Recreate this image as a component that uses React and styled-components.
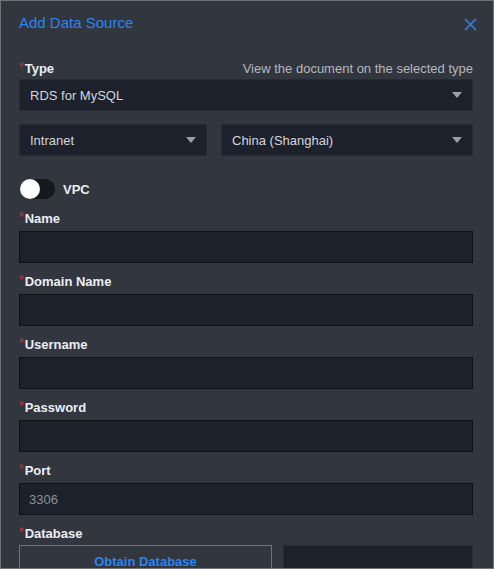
import React from "react";
import styled, { createGlobalStyle } from "styled-components";

const GlobalStyle = createGlobalStyle`
  html, body { margin: 0; padding: 0; background: #31363f; }
  body { font-family: "Liberation Sans", Arial, sans-serif; }
  * { box-sizing: border-box; }
`;

const Frame = styled.div`
  width: 494px;
  height: 569px;
  border: 1px solid #707379;
  background: #31363f;
  overflow: hidden;
  display: flex;
  flex-direction: column;
`;

const Header = styled.div`
  display: flex;
  align-items: center;
  justify-content: space-between;
  padding: 12px 16px 0 18px;
  height: 32px;
`;

const Title = styled.h1`
  margin: 0;
  font-size: 15px;
  line-height: 20px;
  font-weight: 400;
  color: #2b84f2;
`;

const CloseButton = styled.button`
  border: 0;
  background: none;
  padding: 0;
  width: 14px;
  height: 14px;
  display: flex;
  align-items: center;
  justify-content: center;
  cursor: pointer;
  margin-top: 2px;
`;

const Body = styled.div`
  padding: 26px 20px 0 18px;
  display: flex;
  flex-direction: column;
`;

const LabelRow = styled.div`
  display: flex;
  justify-content: space-between;
  align-items: center;
  height: 19px;
  padding-top: 1px;
  margin-bottom: ${(p) => p.$gap ?? 3}px;
`;

const Label = styled.label`
  font-size: 13px;
  line-height: 18px;
  font-weight: 700;
  color: #eceef1;
  &::before {
    content: "*";
    color: #e0262b;
    font-weight: 400;
    font-size: 12px;
    margin-right: 1px;
    position: relative;
    top: -2px;
  }
`;

const DocLink = styled.span`
  font-size: 13px;
  line-height: 18px;
  color: #b4b8be;
`;

const SelectBox = styled.div`
  height: 32px;
  flex: ${(p) => p.$flex ?? "1 1 auto"};
  width: ${(p) => p.$width || "auto"};
  background: #1c212b;
  border: 1px solid #262b34;
  display: flex;
  align-items: center;
  justify-content: space-between;
  padding: 0 10px 0 10px;
  font-size: 13px;
  color: #d3d6db;
`;

const Caret = styled.span`
  width: 0;
  height: 0;
  border-left: 5px solid transparent;
  border-right: 5px solid transparent;
  border-top: 6px solid #9ca0a7;
`;

const SelectRow = styled.div`
  display: flex;
  gap: 14px;
  margin-top: 13px;
`;

const ToggleRow = styled.div`
  display: flex;
  align-items: center;
  gap: 8px;
  height: 20px;
  margin: 23px 0 10px 1px;
`;

const Track = styled.span`
  width: 35px;
  height: 20px;
  border-radius: 10px;
  background: #15181d;
  position: relative;
  display: inline-block;
`;

const Knob = styled.span`
  position: absolute;
  left: 0;
  top: 0;
  width: 20px;
  height: 20px;
  border-radius: 50%;
  background: #ffffff;
`;

const ToggleText = styled.span`
  font-size: 13px;
  font-weight: 700;
  color: #eceef1;
`;

const Field = styled.div`
  display: flex;
  flex-direction: column;
  margin-bottom: 9px;
`;

const Input = styled.input`
  height: 32px;
  width: 100%;
  background: #1c212b;
  border: 1px solid #0e1116;
  padding: 0 9px;
  font-family: inherit;
  font-size: 13px;
  color: #8d9198;
  outline: none;
`;

const DbRow = styled.div`
  display: flex;
  gap: 11px;
`;

const BlueButton = styled.button`
  width: 253px;
  height: 32px;
  flex: none;
  background: transparent;
  border: 1px solid #2680f0;
  color: #2b84f2;
  font-family: inherit;
  font-size: 13px;
  font-weight: 700;
`;

const DarkBox = styled.div`
  flex: 1;
  height: 32px;
  background: #1c212b;
  border: 1px solid #272c35;
`;

const fields = [
  { label: "Name", value: "" },
  { label: "Domain Name", value: "" },
  { label: "Username", value: "" },
  { label: "Password", value: "" },
  { label: "Port", value: "3306" },
];

export default function App() {
  return (
    <>
      <GlobalStyle />
      <Frame>
        <Header>
          <Title>Add Data Source</Title>
          <CloseButton aria-label="close">
            <svg width="13" height="13" viewBox="0 0 13 13">
              <path d="M1 1 L12 12 M12 1 L1 12" stroke="#2b84f2" strokeWidth="1.6" fill="none" />
            </svg>
          </CloseButton>
        </Header>
        <Body>
          <LabelRow $gap={1}>
            <Label>Type</Label>
            <DocLink>View the document on the selected type</DocLink>
          </LabelRow>
          <SelectBox>
            <span>RDS for MySQL</span>
            <Caret />
          </SelectBox>
          <SelectRow>
            <SelectBox $flex="none" $width="188px">
              <span>Intranet</span>
              <Caret />
            </SelectBox>
            <SelectBox>
              <span>China (Shanghai)</span>
              <Caret />
            </SelectBox>
          </SelectRow>
          <ToggleRow>
            <Track>
              <Knob />
            </Track>
            <ToggleText>VPC</ToggleText>
          </ToggleRow>
          {fields.map((f) => (
            <Field key={f.label}>
              <LabelRow>
                <Label>{f.label}</Label>
              </LabelRow>
              <Input defaultValue={f.value} type="text" />
            </Field>
          ))}
          <LabelRow $gap={2}>
            <Label>Database</Label>
          </LabelRow>
          <DbRow>
            <BlueButton>Obtain Database</BlueButton>
            <DarkBox />
          </DbRow>
        </Body>
      </Frame>
    </>
  );
}
